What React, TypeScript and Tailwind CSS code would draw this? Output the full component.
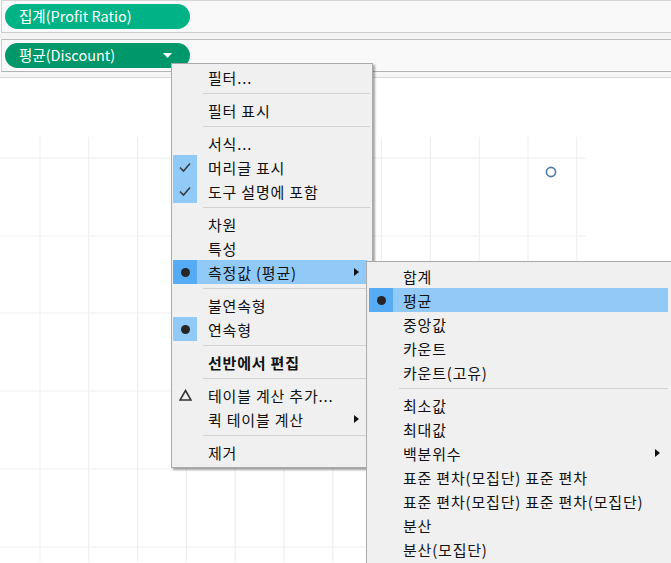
import React from "react";

type Icon = "check" | "dot" | "delta" | null;

type Item =
  | { sep: true }
  | {
      sep?: false;
      label: string;
      icon?: Icon;
      iconBg?: "light" | "dark" | null;
      hl?: boolean;
      arrow?: boolean;
      bold?: boolean;
    };

const mainItems: Item[] = [
  { label: "필터..." },
  { sep: true },
  { label: "필터 표시" },
  { sep: true },
  { label: "서식..." },
  { label: "머리글 표시", icon: "check", iconBg: "light" },
  { label: "도구 설명에 포함", icon: "check", iconBg: "light" },
  { sep: true },
  { label: "차원" },
  { label: "특성" },
  { label: "측정값 (평균)", icon: "dot", iconBg: "dark", hl: true, arrow: true },
  { sep: true },
  { label: "불연속형" },
  { label: "연속형", icon: "dot", iconBg: "light" },
  { sep: true },
  { label: "선반에서 편집", bold: true },
  { sep: true },
  { label: "테이블 계산 추가...", icon: "delta" },
  { label: "퀵 테이블 계산", arrow: true },
  { sep: true },
  { label: "제거" },
];

const subItems: Item[] = [
  { label: "합계" },
  { label: "평균", icon: "dot", iconBg: "dark", hl: true },
  { label: "중앙값" },
  { label: "카운트" },
  { label: "카운트(고유)" },
  { sep: true },
  { label: "최소값" },
  { label: "최대값" },
  { label: "백분위수", arrow: true },
  { label: "표준 편차(모집단) 표준 편차" },
  { label: "표준 편차(모집단) 표준 편차(모집단)" },
  { label: "분산" },
  { label: "분산(모집단)" },
];

function IconGlyph({ icon }: { icon: Icon }) {
  if (icon === "check")
    return (
      <svg width="14" height="12" viewBox="0 0 14 12">
        <polyline points="2,6.5 5.5,10 12,2.5" fill="none" stroke="#3c3c3c" strokeWidth="1.6" />
      </svg>
    );
  if (icon === "dot")
    return <div className="w-[9px] h-[9px] rounded-full bg-[#262626]" />;
  if (icon === "delta")
    return (
      <svg width="13" height="12" viewBox="0 0 13 12">
        <polygon points="6.5,1.5 12,11 1,11" fill="none" stroke="#333" strokeWidth="1.6" strokeLinejoin="miter" />
      </svg>
    );
  return null;
}

function Arrow() {
  return (
    <svg width="5" height="8" viewBox="0 0 5 8">
      <polygon points="0,0 5,4 0,8" fill="#111" />
    </svg>
  );
}

function Menu({ items, textGap, sepClass }: { items: Item[]; textGap: string; sepClass: string }) {
  return (
    <>
      {items.map((it, i) => {
        if (it.sep) return <div key={i} className={`h-[9px] flex items-center ${sepClass}`}><div className="h-px w-full bg-[#d2d2d2]" /></div>;
        const bg = it.iconBg === "dark" ? "bg-[#55acf5]" : it.iconBg === "light" ? "bg-[#91c9f7]" : "";
        return (
          <div key={i} className={`h-[24px] flex items-center ${it.hl ? "bg-[#91c9f7]" : ""}`}>
            <div className={`w-[24px] h-full flex items-center justify-center shrink-0 ${bg}`}>
              <IconGlyph icon={it.icon ?? null} />
            </div>
            <div className={`${textGap} flex-1 text-[15px] tracking-[0.8px] text-[#111] whitespace-nowrap ${it.bold ? "font-bold" : ""}`}>
              {it.label}
            </div>
            {it.arrow && <div className="pr-[8px] flex items-center"><Arrow /></div>}
          </div>
        );
      })}
    </>
  );
}

export default function App() {
  const vx = Array.from({ length: 12 }, (_, k) => 40 + 48.8 * k);
  const hy = [80, 158, 235, 313, 391, 469];
  return (
    <div className="relative w-[671px] h-[563px] overflow-hidden bg-white font-['Noto_Sans_CJK_KR',sans-serif] leading-none">
      {/* shelves */}
      <div className="h-[33px] bg-[#f9f9f9] border-t border-b border-l border-t-[#d6d6d6] border-b-[#cdcdcd] border-l-[#cfcfcf] ml-px flex items-center pl-[3px]">
        <div className="w-[185px] h-[25px] rounded-full bg-[#00b386] flex items-center pl-[14px] text-white text-[14.5px]">
          집계(Profit Ratio)
        </div>
      </div>
      <div className="h-[6px] bg-[#f4f4f4]" />
      <div className="h-[33px] bg-[#f9f9f9] border-t border-b border-l border-t-[#bdbdbd] border-b-[#b3b3b3] border-l-[#cfcfcf] ml-px flex items-center pl-[3px]">
        <div className="w-[185px] h-[25px] rounded-full bg-[#00976a] flex items-center pl-[14px] pr-[18px] text-white text-[14.5px]">
          <span className="flex-1">평균(Discount)</span>
          <svg width="9" height="5" viewBox="0 0 9 5"><polygon points="0,0 9,0 4.5,5" fill="#fff" /></svg>
        </div>
      </div>
      <div className="h-[6px] bg-[#f6f6f6] border-b border-[#d4d4d4]" />
      {/* chart canvas */}
      <svg width="671" height="484" className="block">
        {vx.map((x, i) => (
          <line key={"v" + i} x1={x} y1={59} x2={x} y2={484} stroke="#efefef" strokeWidth="1.2" />
        ))}
        {hy.map((y, i) => (
          <line key={"h" + i} x1={0} y1={y} x2={586} y2={y} stroke="#efefef" strokeWidth="1.2" />
        ))}
        <circle cx="551" cy="94" r="4.6" fill="none" stroke="#4e79a7" strokeWidth="1.6" />
      </svg>

      {/* main context menu */}
      <div className="absolute left-[171px] top-[63px] w-[202px] bg-[#f0f0f0] border border-[#a9a9a9] pl-px pr-[5px] pt-[1px] pb-[3px] shadow-[2px_2px_2px_rgba(0,0,0,0.35)]">
        <Menu items={mainItems} textGap="pl-[11px]" sepClass="ml-[30px] mr-[-3px]" />
      </div>

      {/* submenu */}
      <div className="absolute left-[366px] top-[261px] w-[308px] h-[320px] bg-[#f0f0f0] border border-[#a9a9a9] pl-[2px] pr-[5px] pt-[2px]">
        <Menu items={subItems} textGap="pl-[10px]" sepClass="ml-[30px]" />
      </div>
    </div>
  );
}
